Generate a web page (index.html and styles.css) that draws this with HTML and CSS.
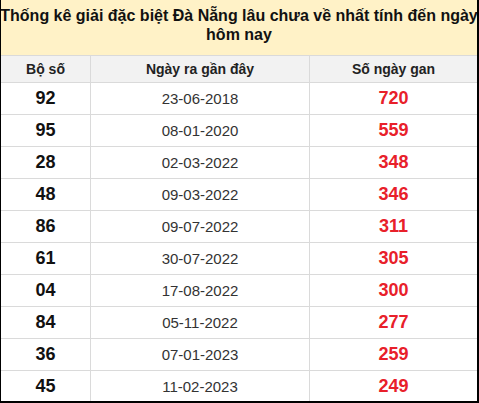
FILE: index.html
```html
<!DOCTYPE html>
<html lang="vi">
<head>
<meta charset="utf-8">
<title>Thống kê giải đặc biệt Đà Nẵng</title>
<link rel="stylesheet" href="styles.css">
</head>
<body>
<div class="board">
  <div class="title">
    <span class="line">Thống kê giải đặc biệt Đà Nẵng lâu chưa về nhất tính đến ngày</span>
    <span class="line">hôm nay</span>
  </div>
  <div class="row head">
    <div class="cell">Bộ số</div>
    <div class="cell">Ngày ra gần đây</div>
    <div class="cell">Số ngày gan</div>
  </div>
  <div class="row"><div class="cell num">92</div><div class="cell date">23-06-2018</div><div class="cell gan">720</div></div>
  <div class="row"><div class="cell num">95</div><div class="cell date">08-01-2020</div><div class="cell gan">559</div></div>
  <div class="row"><div class="cell num">28</div><div class="cell date">02-03-2022</div><div class="cell gan">348</div></div>
  <div class="row"><div class="cell num">48</div><div class="cell date">09-03-2022</div><div class="cell gan">346</div></div>
  <div class="row"><div class="cell num">86</div><div class="cell date">09-07-2022</div><div class="cell gan">311</div></div>
  <div class="row"><div class="cell num">61</div><div class="cell date">30-07-2022</div><div class="cell gan">305</div></div>
  <div class="row"><div class="cell num">04</div><div class="cell date">17-08-2022</div><div class="cell gan">300</div></div>
  <div class="row"><div class="cell num">84</div><div class="cell date">05-11-2022</div><div class="cell gan">277</div></div>
  <div class="row"><div class="cell num">36</div><div class="cell date">07-01-2023</div><div class="cell gan">259</div></div>
  <div class="row"><div class="cell num">45</div><div class="cell date">11-02-2023</div><div class="cell gan">249</div></div>
</div>
</body>
</html>
```
FILE: styles.css
```css
html, body {
  margin: 0;
  padding: 0;
  background: #fff;
}
body {
  font-family: "Liberation Sans", Arial, sans-serif;
  color: #222;
}
.board {
  width: 479px;
  height: 403px;
  box-sizing: border-box;
  border-left: 1px solid #000;
  border-right: 2px solid #000;
  border-bottom: 2px solid #000;
  overflow: hidden;
}
.title {
  height: 55px;
  box-sizing: border-box;
  background: #fff2c7;
  padding: 6px 0 0;
  display: flex;
  flex-direction: column;
  align-items: center;
  font-weight: bold;
  font-size: 16px;
  line-height: 19px;
  color: #111;
}
.line {
  white-space: nowrap;
}
.row {
  display: grid;
  grid-template-columns: 89px 219px 1fr;
  height: 32px;
  box-sizing: border-box;
  border-top: 1px solid #dadada;
}
.row.head {
  height: 27px;
  background: #f2f2f2;
}
.cell {
  display: flex;
  align-items: center;
  justify-content: center;
  box-sizing: border-box;
}
.cell + .cell {
  border-left: 1px solid #dadada;
}
.head .cell {
  font-weight: bold;
  font-size: 14px;
  color: #222;
}
.num {
  font-weight: bold;
  font-size: 18px;
  color: #111;
}
.date {
  font-size: 15px;
  color: #333;
}
.gan {
  font-weight: bold;
  font-size: 18px;
  color: #e8202a;
}
```
